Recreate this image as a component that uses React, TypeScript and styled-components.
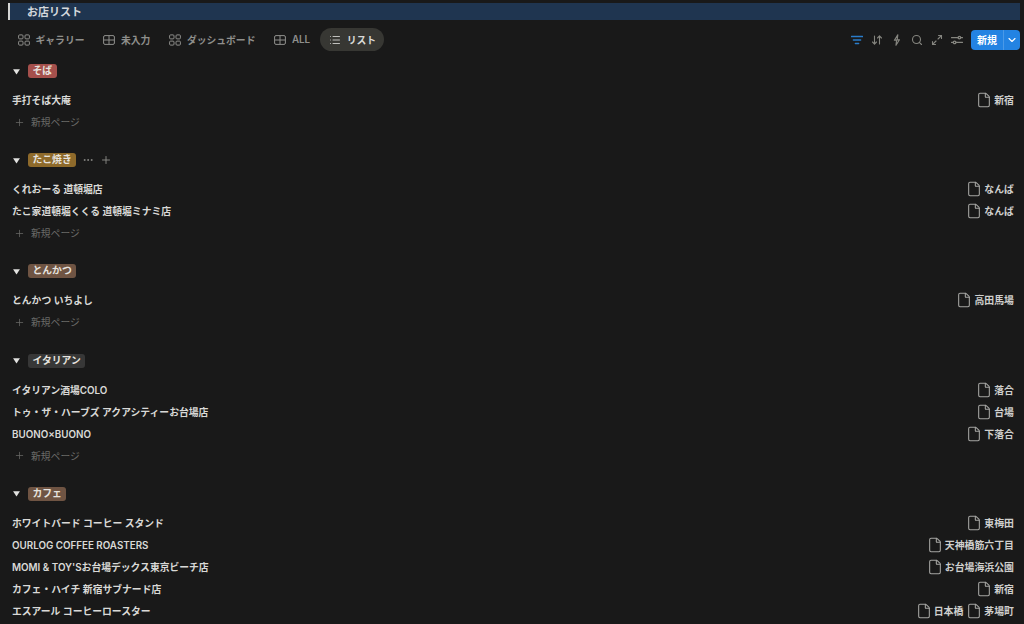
import styled, {createGlobalStyle} from "styled-components";
import {
  ArrowDownUp,
  ChevronDown,
  File,
  List,
  Maximize2,
  MoreHorizontal,
  Plus,
  Search,
} from "lucide-react";

interface Row {
  name: string;
  places: string[];
}
interface Group {
  tag: string;
  color: string;
  hovered?: boolean;
  addPage?: boolean;
  rows: Row[];
}

const GalleryIcon = () => (
  <TabSvg viewBox="0 0 12 12">
    <rect x="0.6" y="0.9" width="4.4" height="4" rx="1" />
    <rect x="7" y="0.9" width="4.4" height="4" rx="1" />
    <rect x="0.6" y="7.1" width="4.4" height="4" rx="1" />
    <rect x="7" y="7.1" width="4.4" height="4" rx="1" />
  </TabSvg>
);

const TableIcon = () => (
  <TabSvg viewBox="0 0 12 12">
    <rect x="0.6" y="1.6" width="10.8" height="8.8" rx="1.4" />
    <path d="M0.6 6h10.8M6 1.6v8.8" />
  </TabSvg>
);

const ListIcon = () => <List size={12} strokeWidth={1.7} />;

const FilterIcon = () => (
  <ToolSvg viewBox="0 0 12 12" $color="#2a7cc9" $weight={1.5}>
    <path d="M0.5 2.6h11M2.4 6h7.2M4.4 9.4h3.2" />
  </ToolSvg>
);

const BoltIcon = () => (
  <ToolSvg viewBox="0 0 12 12" $color="#85857f" $weight={1.2}>
    <path d="M6.8 0.8 3.4 6.2h2.2L5 11.2l3.4-5.4H6.2z" />
  </ToolSvg>
);

const SlidersIcon = () => (
  <ToolSvg viewBox="0 0 12 12" $color="#85857f" $weight={1.3}>
    <path d="M0.5 3.6h6.4M10 3.6h1.5M0.5 8.4h1.5M5.1 8.4h6.4" />
    <circle cx="8.4" cy="3.6" r="1.3" />
    <circle cx="3.6" cy="8.4" r="1.3" />
  </ToolSvg>
);

const tabs = [
  {label: "ギャラリー", icon: GalleryIcon},
  {label: "未入力", icon: TableIcon},
  {label: "ダッシュボード", icon: GalleryIcon},
  {label: "ALL", icon: TableIcon},
  {label: "リスト", icon: ListIcon, active: true},
];

const groups: Group[] = [
  {
    tag: "そば",
    color: "#a5504c",
    addPage: true,
    rows: [{name: "手打そば大庵", places: ["新宿"]}],
  },
  {
    tag: "たこ焼き",
    color: "#8e6a2b",
    hovered: true,
    addPage: true,
    rows: [
      {name: "くれおーる 道頓堀店", places: ["なんば"]},
      {name: "たこ家道頓堀くくる 道頓堀ミナミ店", places: ["なんば"]},
    ],
  },
  {
    tag: "とんかつ",
    color: "#6f5443",
    addPage: true,
    rows: [{name: "とんかつ いちよし", places: ["高田馬場"]}],
  },
  {
    tag: "イタリアン",
    color: "#373737",
    addPage: true,
    rows: [
      {name: "イタリアン酒場COLO", places: ["落合"]},
      {name: "トゥ・ザ・ハーブズ アクアシティーお台場店", places: ["台場"]},
      {name: "BUONO×BUONO", places: ["下落合"]},
    ],
  },
  {
    tag: "カフェ",
    color: "#6f5443",
    rows: [
      {name: "ホワイトバード コーヒー スタンド", places: ["東梅田"]},
      {name: "OURLOG COFFEE ROASTERS", places: ["天神橋筋六丁目"]},
      {name: "MOMI & TOY'Sお台場デックス東京ビーチ店", places: ["お台場海浜公園"]},
      {name: "カフェ・ハイチ 新宿サブナード店", places: ["新宿"]},
      {name: "エスアール コーヒーロースター", places: ["日本橋", "茅場町"]},
    ],
  },
];

const App = () => {
  return (
    <Page>
      <GlobalStyle />
      <TitleBar>お店リスト</TitleBar>
      <Toolbar>
        <Tabs>
          {tabs.map(tab => {
            const Icon = tab.icon;
            return (
              <Tab key={tab.label} $active={tab.active}>
                <Icon />
                {tab.label}
              </Tab>
            );
          })}
        </Tabs>
        <Tools>
          <ToolIcons>
            <FilterIcon />
            <ArrowDownUp size={12} strokeWidth={2.2} color="#85857f" />
            <BoltIcon />
            <Search size={12} strokeWidth={2.2} color="#85857f" />
            <Maximize2 size={12} strokeWidth={2.2} color="#85857f" />
            <SlidersIcon />
          </ToolIcons>
          <NewButton>
            <NewLabel>新規</NewLabel>
            <NewArrow>
              <ChevronDown size={12} strokeWidth={2.2} />
            </NewArrow>
          </NewButton>
        </Tools>
      </Toolbar>
      <Groups>
        {groups.map(group => (
          <Section key={group.tag}>
            <GroupHeader>
              <Caret viewBox="0 0 10 10">
                <path d="M1.2 2.6h7.6L5 8.2z" fill="currentColor" />
              </Caret>
              <Tag $color={group.color}>{group.tag}</Tag>
              {group.hovered && (
                <HoverActions>
                  <MoreHorizontal size={12} strokeWidth={1.8} />
                  <Plus size={12} strokeWidth={1.8} />
                </HoverActions>
              )}
            </GroupHeader>
            {group.rows.map(row => (
              <ItemRow key={row.name}>
                <ItemName>{row.name}</ItemName>
                <Places>
                  {row.places.map(place => (
                    <Place key={place}>
                      <File size={16} strokeWidth={1.6} color="#a5a5a2" />
                      {place}
                    </Place>
                  ))}
                </Places>
              </ItemRow>
            ))}
            {group.addPage && (
              <AddPage>
                <Plus size={11} strokeWidth={1.6} />
                <AddLabel>新規ページ</AddLabel>
              </AddPage>
            )}
          </Section>
        ))}
      </Groups>
    </Page>
  );
};

const GlobalStyle = createGlobalStyle`
  html, body {
    margin: 0;
    background: #191919;
  }
`;

const Page = styled.div`
  width: 1024px;
  height: 624px;
  overflow: hidden;
  box-sizing: border-box;
  padding-top: 3px;
  background: #191919;
  color: #d9d9d7;
  font-family: Inter, "Noto Sans CJK JP", sans-serif;
`;

const TitleBar = styled.div`
  box-sizing: border-box;
  height: 17px;
  margin: 0 4px 0 8px;
  padding-left: 17px;
  border-left: 2px solid #d5d5d3;
  background: #1f3550;
  color: #d4d8dc;
  font-size: 11px;
  font-weight: 600;
  line-height: 18px;
`;

const Toolbar = styled.div`
  display: flex;
  align-items: center;
  justify-content: space-between;
  height: 23px;
  margin-top: 8px;
  padding: 0 4px 0 8.5px;
`;

const Tabs = styled.div`
  display: flex;
  align-items: center;
`;

const Tab = styled.div<{$active?: boolean}>`
  display: flex;
  align-items: center;
  gap: 5.5px;
  height: 23px;
  padding: 0 ${p => (p.$active ? "8px" : "9.5px")} 0 9.5px;
  border-radius: 12px;
  background: ${p => (p.$active ? "#373733" : "transparent")};
  color: ${p => (p.$active ? "#d9d9d7" : "#8f8f8c")};
  font-size: 9.8px;
  font-weight: 600;
  white-space: nowrap;
`;

const TabSvg = styled.svg`
  width: 12px;
  height: 12px;
  fill: none;
  stroke: currentColor;
  stroke-width: 1;
`;

const Tools = styled.div`
  display: flex;
  align-items: center;
  gap: 8px;
`;

const ToolIcons = styled.div`
  display: flex;
  align-items: center;
  gap: 8px;
`;

const ToolSvg = styled.svg<{$color: string; $weight: number}>`
  width: 12px;
  height: 12px;
  fill: none;
  stroke: ${p => p.$color};
  stroke-width: ${p => p.$weight};
  stroke-linecap: round;
  stroke-linejoin: round;
`;

const NewButton = styled.div`
  display: flex;
  align-items: stretch;
  height: 20px;
  border-radius: 4px;
  background: #2383e2;
  color: #fff;
`;

const NewLabel = styled.div`
  display: flex;
  align-items: center;
  width: 32px;
  justify-content: center;
  font-size: 10px;
  font-weight: 600;
`;

const NewArrow = styled.div`
  display: flex;
  align-items: center;
  justify-content: center;
  width: 16px;
  border-left: 1px solid rgba(255, 255, 255, 0.18);
`;

const Groups = styled.div`
  display: flex;
  flex-direction: column;
  gap: 16.2px;
  margin-top: 9px;
  padding: 0 10px 0 12px;
`;

const Section = styled.section`
  display: flex;
  flex-direction: column;
`;

const GroupHeader = styled.div`
  display: flex;
  align-items: center;
  height: 22px;
  margin-bottom: 7px;
`;

const Caret = styled.svg`
  width: 9px;
  height: 9px;
  margin-right: 7px;
  color: #e2e2e0;
`;

const Tag = styled.span<{$color: string}>`
  padding: 0 4.5px;
  height: 14px;
  border-radius: 3px;
  background: ${p => p.$color};
  color: #e6e3df;
  font-size: 9.8px;
  font-weight: 600;
  line-height: 14px;
`;

const HoverActions = styled.div`
  display: flex;
  align-items: center;
  gap: 6px;
  margin-left: 6px;
  color: #8f8f8b;
`;

const ItemRow = styled.div`
  display: flex;
  align-items: center;
  justify-content: space-between;
  height: 22px;
`;

const ItemName = styled.div`
  padding-top: 2px;
  color: #d9d9d7;
  font-size: 9.8px;
  font-weight: 600;
  line-height: 22px;
`;

const Places = styled.div`
  display: flex;
  gap: 3px;
`;

const Place = styled.div`
  display: flex;
  align-items: center;
  gap: 2px;
  color: #cfcfcd;
  font-size: 9.9px;
  font-weight: 600;
  line-height: 24px;
`;

const AddPage = styled.div`
  display: flex;
  align-items: center;
  gap: 7px;
  height: 22px;
  padding-left: 2px;
  color: #6b6b68;
  font-size: 9.8px;
`;

const AddLabel = styled.span`
  margin-left: -1px;
  padding-top: 2px;
  line-height: 22px;
`;

export default App;
